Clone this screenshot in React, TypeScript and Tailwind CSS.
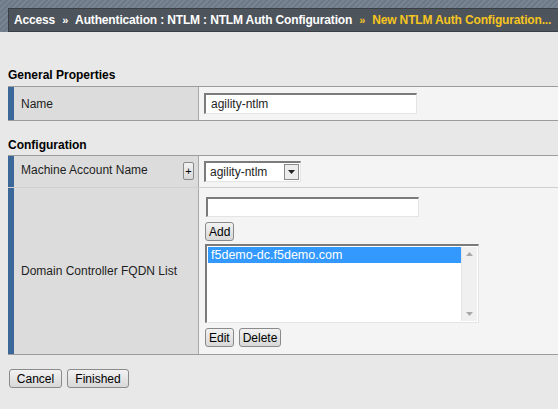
export default function App() {
  const inset =
    "border-t-2 border-l-2 border-r border-b border-t-[#7b7b7b] border-l-[#7b7b7b] border-r-[#e4e4e4] border-b-[#e4e4e4] bg-white";
  const btn =
    "rounded-[3px] border border-[#8a8a8a] bg-gradient-to-b from-[#f2f2f2] to-[#d8d8d8] px-[3px] text-[12px] leading-[16px] text-black";

  return (
    <div
      className="h-[409px] w-[558px] overflow-hidden bg-[#e8e8e8] text-[12px] text-[#1e1e1e]"
      style={{ fontFamily: '"Liberation Sans", Arial, sans-serif' }}
    >
      {/* breadcrumb */}
      <div className="h-[32px] bg-[repeating-linear-gradient(135deg,#6d7986_0px,#6d7986_2px,#788491_2px,#788491_4px)] pl-[8px] pt-[8px]">
        <div className="flex h-[24px] items-center gap-[7px] overflow-hidden whitespace-nowrap border border-r-0 border-[#3a3f45] bg-[#4d545c] pl-[5px] text-[12px] font-bold tracking-[-0.15px] text-white">
          <span>Access</span>
          <span className="text-[11px]">»</span>
          <span>Authentication : NTLM : NTLM Auth Configuration</span>
          <span className="text-[11px] text-[#f7c520]">»</span>
          <span className="text-[#f7c520]">New NTLM Auth Configuration...</span>
        </div>
      </div>

      {/* General Properties */}
      <div className="pl-[8px] pt-[36px] pb-[3px] text-[12px] font-bold leading-[15px] text-black">
        General Properties
      </div>
      <div className="ml-[8px] border-y border-[#9c9c9c]">
        <div className="flex h-[33px]">
          <div className="w-[6px] bg-[#3b6899]" />
          <div className="flex w-[185px] items-center border-r border-[#a8a8a8] bg-[#dcdcdc] pl-[7px]">
            Name
          </div>
          <div className="flex flex-1 items-center bg-[#f4f4f4] pl-[5px]">
            <div className={`${inset} flex h-[21px] w-[213px] items-center pl-[5px] text-[12px]`}>
              agility-ntlm
            </div>
          </div>
        </div>
      </div>

      {/* Configuration */}
      <div className="pl-[8px] pt-[17px] pb-[3px] text-[12px] font-bold leading-[14px] text-black">
        Configuration
      </div>
      <div className="ml-[8px] border-y border-[#9c9c9c]">
        <div className="flex h-[32px] border-b border-[#cfcfcf]">
          <div className="w-[6px] bg-[#3b6899]" />
          <div className="flex w-[185px] items-start justify-between border-r border-[#a8a8a8] bg-[#dcdcdc] pl-[7px] pr-[4px] pt-[5px]">
            <span>Machine Account Name</span>
            <span className="mt-[1px] flex h-[18px] w-[11px] items-center justify-center rounded-[2px] border border-[#8a8a8a] bg-gradient-to-b from-[#f2f2f2] to-[#d8d8d8] text-[11px] leading-none text-black">
              +
            </span>
          </div>
          <div className="flex flex-1 items-center bg-[#f4f4f4] pl-[5px]">
            <div className={`${inset} flex h-[21px] w-[97px] items-center justify-between pl-[4px] pr-[1px] text-[12px]`}>
              <span>agility-ntlm</span>
              <span className="flex h-[16px] w-[15px] items-center justify-center border border-[#8a8a8a] bg-[#ececec]">
                <svg width="7" height="4" viewBox="0 0 7 4">
                  <path d="M0 0h7L3.5 4z" fill="#222" />
                </svg>
              </span>
            </div>
          </div>
        </div>
        <div className="flex h-[166px]">
          <div className="w-[6px] bg-[#3b6899]" />
          <div className="flex w-[185px] items-center border-r border-[#a8a8a8] bg-[#dcdcdc] pl-[7px]">
            Domain Controller FQDN List
          </div>
          <div className="flex flex-1 flex-col items-start bg-[#f4f4f4] pl-[6px] pt-[9px]">
            <div className={`${inset} ml-[1px] h-[20px] w-[213px]`} />
            <button className={`${btn} mt-[5px] h-[19px] px-[2px]`}>Add</button>
            <div className={`${inset} mt-[3px] flex h-[79px] w-[274px] p-[1px]`}>
              <div className="flex-1 bg-white">
                <div className="h-[16px] bg-[#3399ff] pl-[3px] text-[12.5px] leading-[16px] text-white">
                  f5demo-dc.f5demo.com
                </div>
              </div>
              <div className="flex w-[16px] flex-col items-center justify-between border-l border-[#e6e6e6] bg-[#f0f0f0] py-[5px]">
                <svg width="7" height="4" viewBox="0 0 7 4">
                  <path d="M3.5 0L7 4H0z" fill="#a8a8a8" />
                </svg>
                <svg width="7" height="4" viewBox="0 0 7 4">
                  <path d="M0 0h7L3.5 4z" fill="#a8a8a8" />
                </svg>
              </div>
            </div>
            <div className="mt-[5px] flex gap-[5px]">
              <button className={`${btn} h-[19px] px-[2px]`}>Edit</button>
              <button className={`${btn} h-[19px] px-[2px]`}>Delete</button>
            </div>
          </div>
        </div>
      </div>

      <div className="flex gap-[5px] pl-[9px] pt-[14px]">
        <button className={`${btn} h-[19px] w-[53px]`}>Cancel</button>
        <button className={`${btn} h-[19px] w-[62px]`}>Finished</button>
      </div>
    </div>
  );
}
